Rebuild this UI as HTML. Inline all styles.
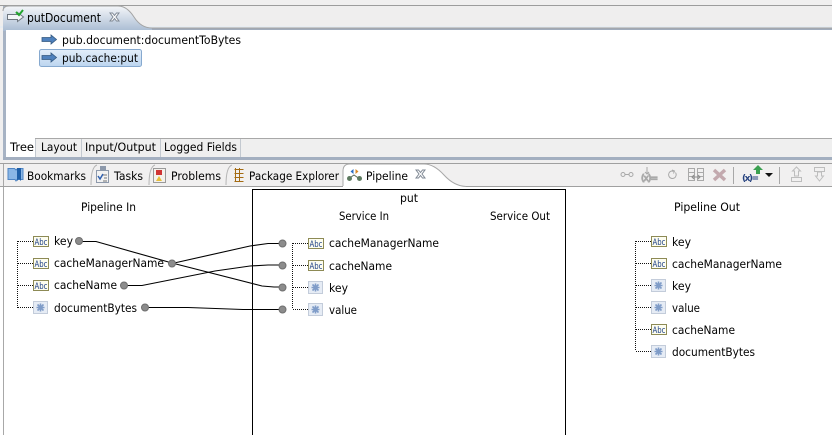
<!DOCTYPE html>
<html><head><meta charset="utf-8">
<style>
html,body{margin:0;padding:0;background:#fff}
svg{display:block}
text{font-family:"DejaVu Sans","Liberation Sans",sans-serif;font-size:11.5px;fill:#000}
</style></head>
<body>
<svg width="832" height="435" viewBox="0 0 832 435" xmlns="http://www.w3.org/2000/svg">
<defs>
<linearGradient id="tabblue" x1="0" y1="0" x2="0" y2="1"><stop offset="0" stop-color="#f4f6f9"/><stop offset="1" stop-color="#a9bcd3"/></linearGradient>
<linearGradient id="sel" x1="0" y1="0" x2="0" y2="1"><stop offset="0" stop-color="#e3eefa"/><stop offset="1" stop-color="#bcd5ef"/></linearGradient>
<g id="abc"><rect x=".5" y=".5" width="15" height="10" fill="#fdfdf0" stroke="#8d8a55"/><text x="1.500" y="9" style="font-size:9px;fill:#1d3f86" textLength="13" lengthAdjust="spacingAndGlyphs">Abc</text></g>
<g id="obj"><rect x=".5" y=".5" width="14" height="12" fill="#e6ecf5" stroke="#c3ccda"/><path d="M4.500 3.500l6 6M10.500 3.500l-6 6M7.500 2.500v8M3.500 6.500h8" stroke="#7f9cc8" stroke-width="1.600"/></g>
<g id="arr"><path d="M0 2.500h9V0l5.500 4.500L9 9V6.500H0z" fill="#4f81bd" stroke="#34587f" stroke-width=".8"/></g>
<circle id="dot" r="3.500" fill="#8c8c8c" stroke="#6f6f6f" stroke-width="1"/>
<path id="x" d="M0 0h2.500l2 2.500 2-2.500H9L6 4 9 8H6.500l-2-2.500-2 2.500H0l3-4z" fill="#fff" stroke="#7f8894" stroke-width="1"/>
</defs>

<!-- base -->
<rect width="832" height="164" fill="#f0efef"/>
<rect y="164" width="832" height="271" fill="#fff"/>

<!-- top editor -->
<rect x="0" y="5" width="832" height="1" fill="#9c9c9c"/>
<rect x="0" y="6" width="832" height="22" fill="#efeeee"/>
<rect x="0" y="26" width="832" height="2" fill="#e8edf2"/>
<rect x="3" y="28" width="829" height="3" fill="#a0abbb"/>
<rect x="3" y="6" width="3" height="154" fill="#a7b3c4"/>
<path d="M3 31V11Q3 6 9 6H118Q127 6 134 17T152 28V31Z" fill="url(#tabblue)"/>
<path d="M3 11Q3 6 9 6H118Q127 6 134 17T152 28H832" fill="none" stroke="#a3a3a3"/>
<rect x="6" y="30" width="826" height="108" fill="#fff"/>
<path d="M7.500 14.500h10v-2l6 4.500-6 4.500v-2h-10z" fill="#f4f6f8" stroke="#6f7780"/>
<path d="M16 12l3 3 4-5" fill="none" stroke="#23a52e" stroke-width="2"/>
<text x="27" y="22" style="font-size:12.500px" textLength="74" lengthAdjust="spacingAndGlyphs">putDocument</text>
<use href="#x" x="110" y="13"/>

<use href="#arr" x="42" y="35"/>
<text x="62" y="44" textLength="179" lengthAdjust="spacingAndGlyphs">pub.document:documentToBytes</text>
<rect x="39.500" y="49.500" width="102" height="17" rx="2" fill="url(#sel)" stroke="#86a9cf"/>
<use href="#arr" x="42" y="53"/>
<text x="62" y="62" textLength="76" lengthAdjust="spacingAndGlyphs">pub.cache:put</text>

<!-- bottom tabs of editor -->
<rect x="6" y="138" width="826" height="1" fill="#a8a8a8"/>
<rect x="6" y="139" width="826" height="18" fill="#efefef"/>
<rect x="6" y="137" width="29" height="20" fill="#fff"/>
<path d="M35.500 139v18M81.500 139v18M160.500 139v18M240.500 139v18" stroke="#c3c9d0"/>
<text x="10" y="151" textLength="24" lengthAdjust="spacingAndGlyphs">Tree</text>
<text x="41" y="151" textLength="36" lengthAdjust="spacingAndGlyphs">Layout</text>
<text x="85" y="151" textLength="71" lengthAdjust="spacingAndGlyphs">Input/Output</text>
<text x="164" y="151" textLength="73" lengthAdjust="spacingAndGlyphs">Logged Fields</text>
<rect x="3" y="157" width="829" height="3" fill="#a3afc0"/>

<!-- view tab bar -->
<rect x="0" y="160" width="832" height="4" fill="#f0efef"/>
<rect x="0" y="163" width="832" height="1" fill="#a0a0a0"/>
<rect x="0" y="164" width="832" height="22" fill="#f1f0f0"/>
<rect x="3" y="164" width="1" height="271" fill="#a8a8a8"/>
<rect x="0" y="186" width="832" height="1" fill="#a0a0a0"/>
<rect x="4" y="187" width="828" height="248" fill="#fff"/>
<path d="M343 187V171Q343 164 350 164H424Q434 164 444 175T466 186.500V187Z" fill="#fff"/>
<path d="M343 186V171Q343 164 350 164H424Q434 164 444 175T466 186.500" fill="none" stroke="#a8a8a8"/>
<path d="M91 185q0-18 6-20M149 185q0-18 6-20M226 185q0-18 6-20" fill="none" stroke="#b5b5b5"/>

<!-- view tab icons -->
<path d="M8 168.500h6.500l1.500 1.500 1.500-1.500H23v11h-6l-1 1.500-1-1.500H8z" fill="#8ab6e6" stroke="#4f85c4"/>
<path d="M17 168h4v13l-2-2-2 2z" fill="#1f5fa8"/>
<text x="27" y="180" textLength="59" lengthAdjust="spacingAndGlyphs">Bookmarks</text>
<rect x="96.500" y="170.500" width="12" height="12" fill="#f2f2f2" stroke="#8d99ab"/>
<rect x="100" y="166" width="6" height="4.500" fill="#8d99ab"/>
<path d="M98 176l2 3 3-5" fill="none" stroke="#2f60b0" stroke-width="1.500"/>
<path d="M103 175h4M104 178h3M103 181h4" stroke="#777"/>
<text x="114" y="180" textLength="29" lengthAdjust="spacingAndGlyphs">Tasks</text>
<rect x="153.500" y="168.500" width="12" height="14" fill="#f4f1ec" stroke="#9a9a9a"/>
<rect x="156" y="170" width="6" height="5" fill="#d03434"/>
<path d="M159 176l3 5h-6z" fill="#e8bf3b"/>
<text x="171" y="180" textLength="50" lengthAdjust="spacingAndGlyphs">Problems</text>
<path d="M234.500 169.500h9M234.500 173.500h9M234.500 177.500h9M234.500 181.500h9M235.500 168v14M239.500 168v14" stroke="#a46b12"/>
<text x="249" y="180" textLength="90" lengthAdjust="spacingAndGlyphs">Package Explorer</text>
<path d="M349 178.500l5-3.500 5 3.500" fill="none" stroke="#5a6a5a"/><circle cx="349.500" cy="178.500" r="2.500" fill="#5d7a5f"/><circle cx="359.500" cy="178.500" r="2.500" fill="#5d7a5f"/>
<path d="M353.500 169l-3 2.500 3 2.500z" fill="#2c6fc4"/><path d="M355.500 169l3 2.500-3 2.500z" fill="#d98a2a"/>
<text x="366" y="180" textLength="42" lengthAdjust="spacingAndGlyphs">Pipeline</text>
<use href="#x" x="416" y="170"/>

<!-- toolbar -->
<g fill="none" stroke="#a9a9a9">
<circle cx="623" cy="174.500" r="2"/><circle cx="631" cy="174.500" r="2"/><path d="M625 174.500h4"/>
<path d="M647 167v7M645 172l2 2 2-2"/>
<text x="641" y="181" style="font-size:9px;fill:#a0a0a0" textLength="17">(x)=</text>
<path d="M675.500 172.500a3.800 3.800 0 1 1-4-1.500l3 .5M672 170l2.500 1-1 2.500"/>
<rect x="688.500" y="168.500" width="6" height="12"/><rect x="697.500" y="168.500" width="6" height="12"/>
<path d="M688.500 172.500h6M688.500 176.500h6M697.500 172.500h6M697.500 176.500h6"/>
<path d="M692 177h8M694 175l-2 2 2 2M698 175l2 2-2 2" stroke="#8e8e8e"/>
</g>
<path d="M714 170l11 10M725 170l-11 10" stroke="#c3a9ae" stroke-width="3.500"/>
<rect x="733" y="167" width="1" height="17" fill="#a8a8a8"/>
<text x="742" y="181" style="font-size:9px;fill:#26427f;font-weight:bold" textLength="17">(x)=</text>
<path d="M756 172v-2h-3l5-5 5 5h-3v4h-4z" fill="#3aa050"/>
<path d="M765 173h8l-4 4z" fill="#111"/>
<rect x="779" y="167" width="1" height="17" fill="#a8a8a8"/>
<g fill="none" stroke="#bdbdbd">
<path d="M796.500 167l4 4h-2v5h-4v-5h-2zM791.500 177.500h10v4h-10z"/>
<path d="M814.500 167.500h10v4h-10zM817.500 172v4h-2l4 5 4-5h-2v-4z"/>
</g>

<!-- put box -->
<rect x="252.500" y="189.500" width="313" height="250" fill="none" stroke="#000"/>
<text x="400" y="202" textLength="18" lengthAdjust="spacingAndGlyphs">put</text>
<text x="81" y="211" textLength="55" lengthAdjust="spacingAndGlyphs">Pipeline In</text>
<text x="339" y="220" textLength="50" lengthAdjust="spacingAndGlyphs">Service In</text>
<text x="490" y="220" textLength="60" lengthAdjust="spacingAndGlyphs">Service Out</text>
<text x="674" y="211" textLength="66" lengthAdjust="spacingAndGlyphs">Pipeline Out</text>

<!-- dotted trees -->
<g fill="none" stroke="#111" stroke-dasharray="1 1">
<path d="M17.500 241v67M18 241.500h15M18 263.500h15M18 285.500h15M18 307.500h15"/>
<path d="M292.500 243v66M293 243.500h15M293 265.500h15M293 287.500h15M293 309.500h15"/>
<path d="M635.500 241v110M636 241.500h15M636 263.500h15M636 285.500h15M636 307.500h15M636 329.500h15M636 351.500h15"/>
</g>

<!-- left list -->
<use href="#abc" x="33" y="236"/><text x="54" y="245" textLength="19" lengthAdjust="spacingAndGlyphs">key</text>
<use href="#abc" x="33" y="258"/><text x="54" y="267" textLength="110" lengthAdjust="spacingAndGlyphs">cacheManagerName</text>
<use href="#abc" x="33" y="280"/><text x="54" y="289" textLength="63" lengthAdjust="spacingAndGlyphs">cacheName</text>
<use href="#obj" x="33" y="301"/><text x="54" y="312" textLength="83" lengthAdjust="spacingAndGlyphs">documentBytes</text>

<!-- service in list -->
<use href="#abc" x="308" y="238"/><text x="329" y="247" textLength="110" lengthAdjust="spacingAndGlyphs">cacheManagerName</text>
<use href="#abc" x="308" y="260"/><text x="329" y="270" textLength="63" lengthAdjust="spacingAndGlyphs">cacheName</text>
<use href="#obj" x="308" y="281"/><text x="329" y="292" textLength="19" lengthAdjust="spacingAndGlyphs">key</text>
<use href="#obj" x="308" y="303"/><text x="329" y="314" textLength="28" lengthAdjust="spacingAndGlyphs">value</text>

<!-- pipeline out list -->
<use href="#abc" x="651" y="236"/><text x="672" y="246" textLength="19" lengthAdjust="spacingAndGlyphs">key</text>
<use href="#abc" x="651" y="258"/><text x="672" y="268" textLength="110" lengthAdjust="spacingAndGlyphs">cacheManagerName</text>
<use href="#obj" x="651" y="279"/><text x="672" y="290" textLength="19" lengthAdjust="spacingAndGlyphs">key</text>
<use href="#obj" x="651" y="301"/><text x="672" y="312" textLength="28" lengthAdjust="spacingAndGlyphs">value</text>
<use href="#abc" x="651" y="324"/><text x="672" y="334" textLength="63" lengthAdjust="spacingAndGlyphs">cacheName</text>
<use href="#obj" x="651" y="345"/><text x="672" y="356" textLength="83" lengthAdjust="spacingAndGlyphs">documentBytes</text>

<!-- connectors -->
<g fill="none" stroke="#000" stroke-width="1.100">
<path d="M79 241.500H96L172 263L262 286 274 287H283"/>
<path d="M172 263.500L250 246 268 243.500H283"/>
<path d="M124 285.500H142L215 271 250 266 268 265H283"/>
<path d="M145 307.500H188L243 309.500H283"/>
</g>
<use href="#dot" x="79" y="241"/>
<use href="#dot" x="172" y="263.500"/>
<use href="#dot" x="124" y="285.500"/>
<use href="#dot" x="145" y="307.500"/>
<use href="#dot" x="282.500" y="243.500"/>
<use href="#dot" x="282.500" y="265.500"/>
<use href="#dot" x="282.500" y="287.500"/>
<use href="#dot" x="282.500" y="309.500"/>
</svg>
</body></html>
